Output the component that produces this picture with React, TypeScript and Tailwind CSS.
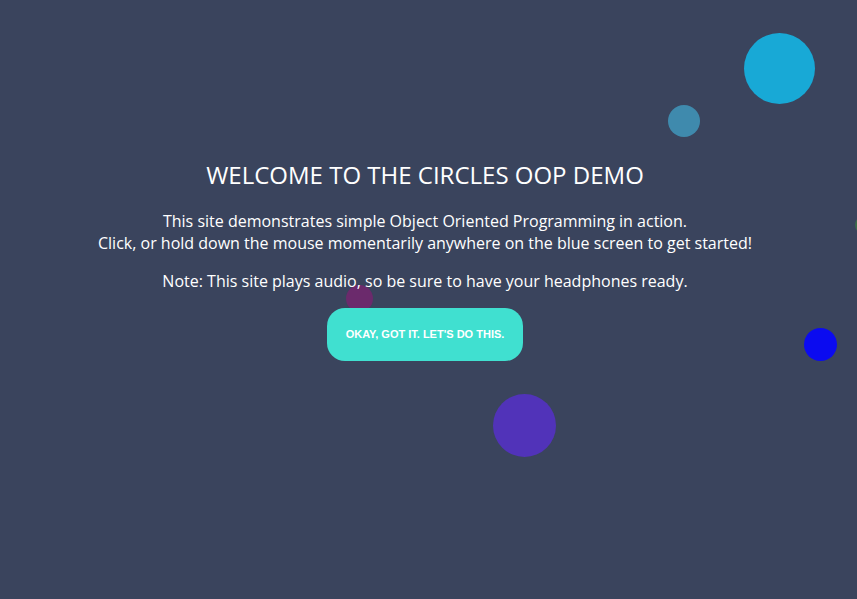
const circles = [
  { left: 744, top: 33, size: 71, color: "bg-[#18a9d6]" },
  { left: 668, top: 105, size: 32, color: "bg-[#3f8aad]" },
  { left: 493, top: 394, size: 63, color: "bg-[#5133b9]" },
  { left: 804, top: 328, size: 33, color: "bg-[#0b0bf0]" },
  { left: 346, top: 285, size: 27, color: "bg-[#6b2a6c]" },
  { left: 855, top: 216, size: 18, color: "bg-[#3d6b4b]" },
];

export default function App() {
  return (
    <div className="relative h-[599px] w-[857px] overflow-hidden bg-[#3a445d] font-['Open_Sans',sans-serif] text-white">
      {circles.map((c, i) => (
        <div
          key={i}
          className={`absolute rounded-full ${c.color}`}
          style={{ left: c.left, top: c.top, width: c.size, height: c.size }}
        />
      ))}
      <div className="relative flex w-[850px] flex-col items-center pt-[158px] text-center">
        <h1 className="text-[24px] leading-[34px] font-normal">WELCOME TO THE CIRCLES OOP DEMO</h1>
        <p className="mt-[18px] text-[16px] leading-[22px] font-normal">
          This site demonstrates simple Object Oriented Programming in action.
          <br />
          Click, or hold down the mouse momentarily anywhere on the blue screen to get started!
        </p>
        <p className="mt-[16px] text-[16px] leading-[22px] font-normal">
          Note: This site plays audio, so be sure to have your headphones ready.
        </p>
        <button className="relative mt-[16px] h-[53px] w-[196px] rounded-[18px] bg-[#40e0d0] font-['Liberation_Sans',Arial,sans-serif] text-[11px] font-bold text-white">
          OKAY, GOT IT. LET'S DO THIS.
        </button>
      </div>
    </div>
  );
}
